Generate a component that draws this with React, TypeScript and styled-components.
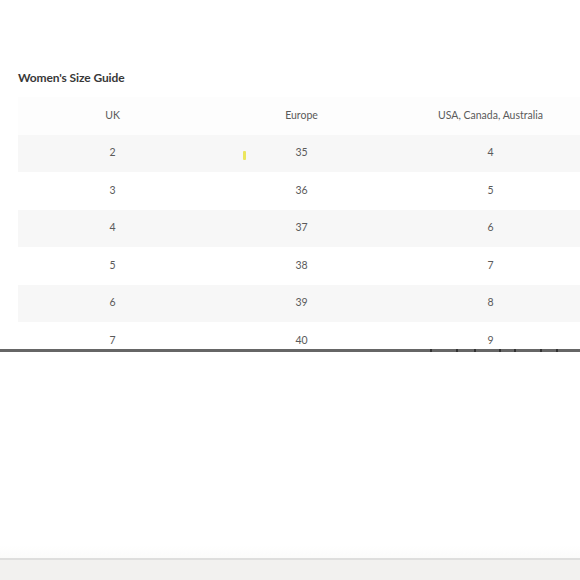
import styled, { createGlobalStyle } from 'styled-components';

const GlobalStyle = createGlobalStyle`
	html, body {
		margin: 0;
		padding: 0;
		background: #ffffff;
	}
	body {
		font-family: Lato, "Open Sans", "Liberation Sans", sans-serif;
	}
`;

const header = ['UK', 'Europe', 'USA, Canada, Australia'];

const sizes = [
	['2', '35', '4'],
	['3', '36', '5'],
	['4', '37', '6'],
	['5', '38', '7'],
	['6', '39', '8'],
	['7', '40', '9'],
];

// little dark specks sitting on the rule, right hand side
const ticks = [430, 456, 474, 499, 514, 540, 556];

const App = () => {
	return (
		<StyledPage>
			<GlobalStyle />
			<Title>Women's Size Guide</Title>
			<TableWrap>
				<Row $head>
					{header.map((h) => (
						<Cell key={h}>{h}</Cell>
					))}
				</Row>
				{sizes.map((row, i) => (
					<Row key={row[0]} $shaded={i % 2 === 0}>
						{row.map((c, j) => (
							<Cell key={j}>{c}</Cell>
						))}
					</Row>
				))}
				<Cursor />
			</TableWrap>
			<Rule>
				{ticks.map((x) => (
					<Tick key={x} style={{ left: x }} />
				))}
			</Rule>
			<Blank />
			<Footer />
		</StyledPage>
	);
};

const StyledPage = styled.div`
	height: 580px;
	display: flex;
	flex-direction: column;
	overflow: hidden;
	padding-top: 70px;
	box-sizing: border-box;
`;

const Title = styled.h1`
	margin: 0 0 11px 18px;
	font-size: 12px;
	line-height: 16px;
	font-weight: 700;
	color: #383838;
	letter-spacing: -0.1px;
`;

const TableWrap = styled.div`
	position: relative;
	height: 252px;
	overflow: hidden;
	padding-left: 18px;
`;

const Row = styled.div<{ $head?: boolean; $shaded?: boolean }>`
	display: grid;
	grid-template-columns: repeat(3, 189px);
	width: 567px;
	height: 37.5px;
	align-items: center;
	background-color: ${(p) => (p.$shaded ? '#f7f7f7' : p.$head ? '#fdfdfd' : '#ffffff')};
`;

const Cell = styled.div`
	text-align: center;
	font-size: 10.5px;
	line-height: 14px;
	margin-top: -2px;
	color: #5a5a5a;
`;

const Cursor = styled.span`
	position: absolute;
	left: 243px;
	top: 54px;
	width: 3px;
	height: 9px;
	border-radius: 1px;
	background: #e9e34c;
	opacity: 0.9;
`;

const Rule = styled.div`
	position: relative;
	height: 3px;
	background: #666666;
	flex-shrink: 0;
`;

const Tick = styled.span`
	position: absolute;
	top: 0;
	width: 2px;
	height: 3px;
	background: #333333;
`;

const Blank = styled.div`
	flex: 1;
	background: linear-gradient(to bottom, #ffffff 94%, #fbfbfa);
`;

const Footer = styled.div`
	height: 20px;
	flex-shrink: 0;
	border-top: 2px solid #dededd;
	background: #f2f1ef;
`;

export default App;
